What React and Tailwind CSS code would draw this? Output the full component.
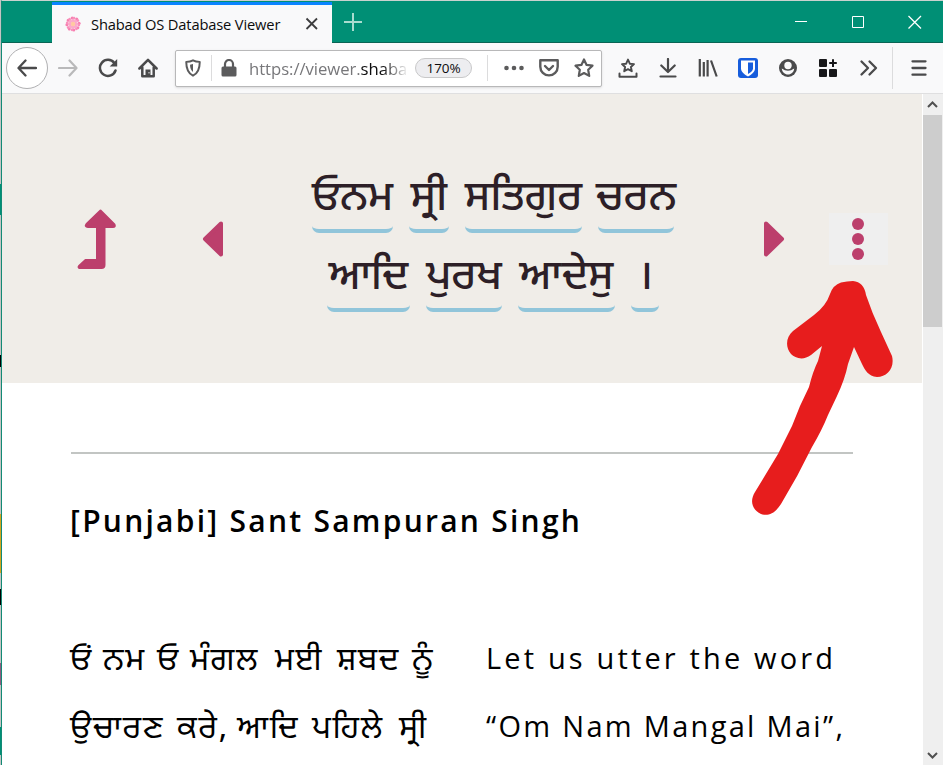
import React from "react";

const Icon = ({ size = 20, className = "", children, sw = 2, color = "#4a4a4b" }) => (
  <svg width={size} height={size} viewBox="0 0 20 20" fill="none" stroke={color} strokeWidth={sw}
    strokeLinecap="round" strokeLinejoin="round" className={"block shrink-0 " + className}>
    {children}
  </svg>
);

const starPoints = "10,1.5 12.6,6.900 18.500,7.700 14.200,11.800 15.200,17.900 10,15 4.800,17.900 5.800,11.800 1.500,7.700 7.400,6.900";

function Tab() {
  return (
    <div className="flex h-[41px] w-[280px] items-center border-t-[3px] border-[#0a84ff] bg-[#f9f9fa] pl-[13px]">
      <svg width="16" height="16" viewBox="0 0 16 16" className="shrink-0">
        {[0, 45, 90, 135, 180, 225, 270, 315].map((a) => (
          <g key={a} transform={`rotate(${a} 8 8)`}>
            <circle cx="7.200" cy="1.900" r="1.500" fill="#f77fb0" />
            <circle cx="9" cy="2.200" r="1.400" fill="#f990bb" />
            <circle cx="8" cy="4.500" r="1.700" fill="#fba9ca" />
          </g>
        ))}
        <circle cx="8" cy="8" r="2.200" fill="#ffc9a0" />
      </svg>
      <span className="ml-[10px] w-[211px] whitespace-nowrap text-[14.700px] tracking-[-0.160px] text-[#0c0c0d]">
        Shabad OS Database Viewer
      </span>
      <svg width="16" height="16" viewBox="0 0 16 16" stroke="#3d3d3e" strokeWidth="1.800" className="ml-[2px] shrink-0">
        <path d="M2.500 2.500l10.500 10.500M13 2.500L2.500 13" />
      </svg>
    </div>
  );
}

function TitleBar() {
  return (
    <div className="flex h-[42px] border-b border-[#0a6454] bg-[#008f75]">
      <div className="w-[50px] shrink-0" />
      <div className="z-10 h-[42px] shrink-0 pt-px"><Tab /></div>
      <svg width="42" height="41" viewBox="0 0 42 41" stroke="#a9dccf" strokeWidth="2" className="shrink-0">
        <path d="M12 21h18M21 12v18" />
      </svg>
      <div className="flex-1" />
      <svg width="160" height="41" viewBox="0 0 160 41" fill="none" stroke="#fff" className="shrink-0">
        <path d="M12 20.500h12M69.500 15.500h11v11h-11z" /><path d="M125.500 15l12.500 12.500M138 15l-12.500 12.500" strokeWidth="1.300" />
      </svg>
    </div>
  );
}

function UrlBar() {
  return (
    <div className="ml-[17px] flex h-[37px] w-[427px] shrink-0 items-center rounded-[2px] border border-[#b8b8b9] bg-white shadow-sm">
      <Icon size={18} className="ml-[8px]" sw={2.2} color="#5b5b5c">
        <path d="M10 1.500c2.500 1.400 5 1.700 7.500 1.700 0 7-1.500 12.300-7.500 15.300C4 15.500 2.500 10.200 2.500 3.200 5 3.200 7.500 2.900 10 1.500z" />
        <path d="M10 5.500v9c-2.500-2-3.200-4.500-3.300-8z" fill="#5b5b5c" stroke="none" />
      </Icon>
      <div className="ml-[9px] h-[26px] w-px shrink-0 bg-[#dcdcdd]" />
      <svg width="16" height="18" viewBox="0 0 16 18" className="ml-[9px] shrink-0">
        <path d="M4 9V5a4 4 0 0 1 8 0v4" fill="none" stroke="#5b5b5c" strokeWidth="2.200" />
        <rect x="0.500" y="7.500" width="15" height="10" rx="1.500" fill="#5b5b5c" />
      </svg>
      <div className="ml-[12px] w-[166px] shrink-0 whitespace-nowrap pt-[2px] text-[16.700px] tracking-[-0.050px] text-[#0c0c0d] [mask-image:linear-gradient(to_right,black_80%,transparent_96%)]">
        <span className="text-[#77777a]">https://viewer.</span>shabad
      </div>
      <div className="box-border flex h-[20px] w-[57px] shrink-0 items-center justify-center rounded-full border border-[#c8c8c9] bg-[#ededf0] text-[13.500px] tracking-[-0.100px] text-[#0c0c0d]">
        170%
      </div>
      <div className="ml-[15px] h-[26px] w-px shrink-0 bg-[#dcdcdd]" />
      <Icon size={20} className="ml-[16px]" color="#5b5b5c">
        <g fill="#5b5b5c" stroke="none"><circle cx="2.500" cy="10" r="2.300" /><circle cx="10" cy="10" r="2.300" /><circle cx="17.500" cy="10" r="2.300" /></g>
      </Icon>
      <Icon size={20} className="ml-[15px]" sw={2.400} color="#5b5b5c">
        <path d="M1.300 2.200h17.400v6.500a8.700 8.700 0 0 1-17.400 0z" /><path d="M6 8l4 4 4-4" />
      </Icon>
      <Icon size={20} className="ml-[15px]" sw={2.200} color="#5b5b5c"><polygon points={starPoints} /></Icon>
    </div>
  );
}

function Toolbar() {
  return (
    <div className="flex h-[51px] items-center border-b border-[#dfdfe0] bg-[#f9f9fa]">
      <div className="ml-[4px] flex size-[42px] shrink-0 items-center justify-center rounded-full border border-[#b0b0b2] bg-white">
        <Icon sw={2.300}><path d="M19 10H1.800M8.500 2.500L1.500 10l7 7.500" /></Icon>
      </div>
      <Icon className="ml-[10px]" color="#b9b9ba" sw={2.200}><path d="M1 10h17M11.500 2.500l7 7.500-7 7.500" /></Icon>
      <Icon className="ml-[20px]" sw={2.500}>
        <path d="M17.500 12.500a8 8 0 1 1-1.200-7.500" />
        <path d="M19.200 1v7.500h-7.500z" fill="#4a4a4b" stroke="none" />
      </Icon>
      <Icon className="ml-[20px]" sw={2.500}>
        <path d="M1.400 10.500L10 1.900l8.600 8.600M4.300 9.500v8.700h11.400V9.500" />
        <path d="M7.500 18v-6.500h5V18z" fill="#4a4a4b" stroke="none" /><path d="M11 14.500v.5" stroke="#fff" strokeWidth="1" />
      </Icon>
      <UrlBar />
      <Icon className="ml-[16px]" sw={2}>
        <path d="M1.500 15.500v3.300h17v-3.300" />
        <polygon points="10,1.500 11.800,5.700 16,6.100 12.900,9 13.800,13.300 10,11.100 6.200,13.300 7.100,9 4,6.100 8.200,5.700" strokeWidth="1.900" />
      </Icon>
      <Icon className="ml-[20px]" sw={2.200}><path d="M10 1v12.500M3.300 7.500L10 14l6.700-6.500M2.500 18.500h15" /></Icon>
      <Icon className="ml-[20px]" sw={2.200}><path d="M1.800 1v17.500M5.800 4v14.500M9.600 2v16.500M13 2.500l5.700 16" strokeLinecap="butt" /></Icon>
      <svg width="20" height="20" viewBox="0 0 20 20" className="ml-[20px] shrink-0">
        <rect width="20" height="20" rx="3" fill="#175ddc" />
        <path d="M3 2.500h14v8c0 3.500-3.500 6-7 8-3.500-2-7-4.500-7-8z" fill="#fff" />
        <path d="M10 4.500h5v6c0 2-2.200 4-5 5.600z" fill="#175ddc" />
      </svg>
      <svg width="20" height="20" viewBox="0 0 20 20" className="ml-[20px] shrink-0">
        <circle cx="10" cy="10" r="9" fill="#4a4a4b" />
        <circle cx="10" cy="7.500" r="3.700" fill="#f9f9fa" />
        <path d="M3.800 10.500q6.200 4.500 12.400 0c-.2 3.500-3 6-6.200 6s-6-2.500-6.200-6z" fill="#f9f9fa" />
      </svg>
      <svg width="20" height="20" viewBox="0 0 20 20" className="ml-[20px] shrink-0" fill="#18181a">
        <rect x="1" y="1" width="8" height="8" rx="1" /><rect x="1" y="11" width="8" height="8" rx="1" /><rect x="11" y="11" width="8" height="8" rx="1" />
        <path d="M14 1.200h2v2.800h2.800v2H16V9h-2V6h-2.800V4H14z" />
      </svg>
      <Icon className="ml-[21px]" sw={2.300}><path d="M2.500 3.500L9 10l-6.500 6.500M10.500 3.500L17 10l-6.500 6.500" /></Icon>
      <div className="ml-[13px] h-[42px] w-px shrink-0 bg-[#dcdcdd]" />
      <Icon className="ml-[16px]" sw={2.300}><path d="M3.500 3.300h13M3.500 10h13M3.500 16.700h13" /></Icon>
    </div>
  );
}

const Word = ({ w, children }) => (
  <span style={{ width: w }} className="flex h-[79px] shrink-0 flex-col items-center">
    <span className="flex h-[50px] items-center whitespace-nowrap pt-[14px] leading-[50px]">{children}</span>
    <span className="mt-[8px] h-[7px] w-full rounded-b-[8px] border-b-4 border-[#91c5da]" />
  </span>
);

function Header() {
  return (
    <header className="flex h-[289px] bg-[#f0ede8] text-[#2d1f27]">
      <svg width="250" height="289" viewBox="0 0 250 289" fill="#bc3f6c" stroke="#bc3f6c" strokeLinejoin="round" className="shrink-0">
        <path d="M98.500 116.500l14 14q1 2.500-1.500 2.500h-8.500v38q0 3-3 3h-22q-1.500-.5-.5-2l6.500-6h11.500v-33h-9q-3.500-.5-1.500-3z" strokeWidth="2" />
        <path d="M203 145l16-15.500v31z" strokeWidth="4" />
      </svg>
      <div lang="pa" className="flex w-[482px] shrink-0 flex-col items-center pt-[74px] font-['Noto_Sans_Gurmukhi','Lohit_Gurmukhi','Mukta_Mahee',sans-serif] text-[42px] font-medium">
        <div className="flex gap-[16px]">
          <Word w={81}>ਓਨਮ</Word><Word w={40}>ਸ੍ਰੀ</Word><Word w={117}>ਸਤਿਗੁਰ</Word><Word w={76}>ਚਰਨ</Word>
        </div>
        <div className="flex gap-[16px]">
          <Word w={83}>ਆਦਿ</Word><Word w={76}>ਪੁਰਖ</Word><Word w={97}>ਆਦੇਸੁ</Word><Word w={28}>।</Word>
        </div>
      </div>
      <svg width="60" height="289" viewBox="0 0 60 289" fill="#bc3f6c" stroke="#bc3f6c" strokeLinejoin="round" className="shrink-0">
        <path d="M32 129.500v31l16-15.500z" strokeWidth="4" />
      </svg>
      <div className="ml-[35px] mt-[119px] flex h-[52px] w-[59px] flex-col items-center justify-center gap-[3px] bg-[#efefef] pr-px">
        <i className="size-[12px] rounded-full bg-[#bc3f6c]" /><i className="size-[12px] rounded-full bg-[#bc3f6c]" /><i className="size-[12px] rounded-full bg-[#bc3f6c]" />
      </div>
    </header>
  );
}

function Scrollbar() {
  return (
    <div className="flex w-[21px] shrink-0 flex-col border-l border-white bg-[#efefef]">
      <svg width="20" height="21" viewBox="0 0 20 21" fill="none" stroke="#505050" strokeWidth="2"><path d="M5 13l4.500-4.500L14 13" /></svg>
      <div className="h-[212px] w-[19px] bg-[#cdcdcd]" />
      <div className="flex-1" />
      <svg width="20" height="21" viewBox="0 0 20 21" fill="none" stroke="#505050" strokeWidth="2"><path d="M5 9l4.500 4.500L14 9" /></svg>
    </div>
  );
}

export default function App() {
  return (
    <div className="relative flex h-[765px] w-[943px] overflow-hidden bg-white font-['Open_Sans','Noto_Sans',sans-serif]">
      <div className="flex w-px shrink-0 flex-col bg-[#c4c4c4]">
        <i className="mt-[184px] h-[31px] bg-[#008f75]" />
        <i className="mt-[140px] h-[12px] bg-black" />
        <i className="mt-[147px] h-[59px] bg-[#d3a51f]" />
        <i className="mt-[16px] h-[16px] bg-black" />
        <i className="mt-[58px] h-[22px] bg-[#8d5b80]" />
        <i className="mt-[42px] h-[28px] bg-[#008f75]" />
      </div>
      <div className="flex min-w-0 flex-1 flex-col border-l border-t border-l-[#128a75] border-t-[#c9d2cf]">
        <TitleBar />
        <Toolbar />
        <div className="flex flex-1 overflow-hidden">
          <main className="w-[920px] shrink-0 text-black">
            <Header />
            <div className="ml-[69px] mt-[69px] h-[2px] w-[782px] bg-[#c2c5c3]" />
            <h1 className="ml-[68px] mt-[47px] whitespace-nowrap text-[30px] font-semibold leading-[40px] tracking-[2.260px]">[Punjabi] Sant Sampuran Singh</h1>
            <div className="ml-[68px] mt-[83px] flex leading-[68px]">
              <div lang="pa" className="w-[416px] shrink-0 whitespace-nowrap pt-[5px] font-['Noto_Sans_Gurmukhi','Lohit_Gurmukhi','Mukta_Mahee',sans-serif] text-[32px] tracking-[1.500px]">
                <div className="-mt-px flex">
                  <span className="w-[33px]">ਓਂ</span><span className="w-[54px]">ਨਮ</span><span className="w-[33px]">ਓ</span><span className="w-[85px]">ਮੰਗਲ</span><span className="w-[62px]">ਮਈ</span><span className="w-[75px]">ਸ਼ਬਦ</span><span>ਨੂੰ</span>
                </div>
                <div className="flex">
                  <span className="w-[107px]">ਉਚਾਰਣ</span><span className="w-[60px]">ਕਰੇ,</span><span className="w-[75px]">ਆਦਿ</span><span className="w-[87px]">ਪਹਿਲੇ</span><span>ਸ੍ਰੀ</span>
                </div>
              </div>
              <div className="whitespace-nowrap text-[29px]">
                <div className="tracking-[3.150px]">Let us utter the word</div>
                <div className="tracking-[2.300px]">“Om Nam Mangal Mai”,</div>
              </div>
            </div>
          </main>
          <Scrollbar />
        </div>
      </div>
      <svg width="160" height="250" viewBox="740 270 160 250" fill="#e71d1d" className="absolute left-[740px] top-[270px]">
        <path d="M841 282.500Q847 281 853 281Q864 282 866 295Q872 313 881 332L892 356C895 368 887 377 877 377C868 376 865 370 862 364L854 347L848 364Q845 379 837 396L828 415Q822 430 812 447Q798 476 781 504C774 515 767 516 761 514C751 509 750 500 755 492L778 454L792 426L800 406L809 387Q813 371 818 361L822 346L811 355C803 361 795 358 791 354C785 347 786 337 793 331L814 315Q826 306 830 294Q833 285 841 282.500Z" />
      </svg>
    </div>
  );
}
